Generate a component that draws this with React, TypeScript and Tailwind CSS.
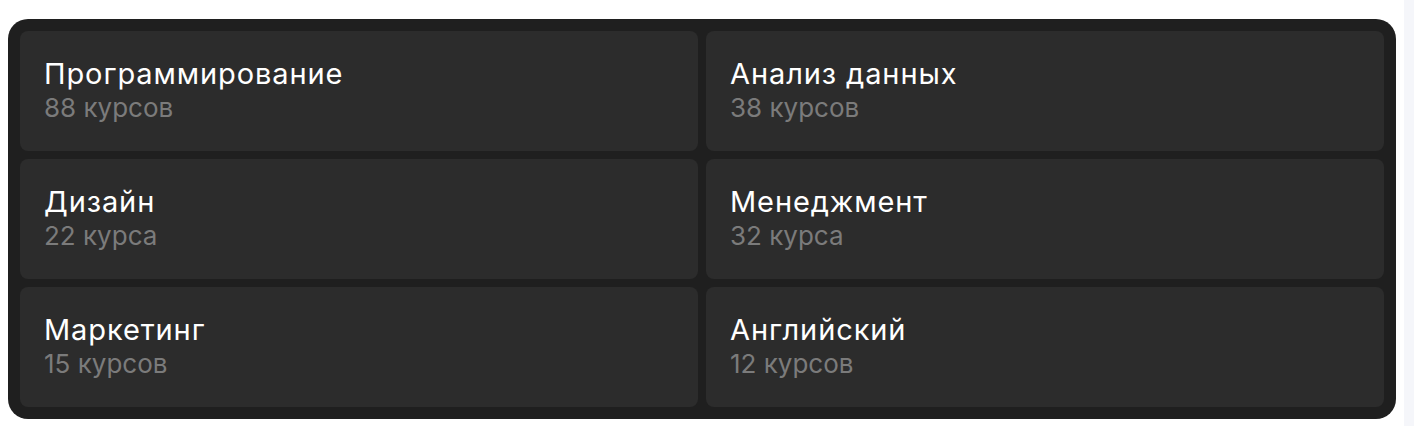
import React from "react";

type Category = {
  title: string;
  count: string;
};

const categories: Category[] = [
  { title: "Программирование", count: "88 курсов" },
  { title: "Анализ данных", count: "38 курсов" },
  { title: "Дизайн", count: "22 курса" },
  { title: "Менеджмент", count: "32 курса" },
  { title: "Маркетинг", count: "15 курсов" },
  { title: "Английский", count: "12 курсов" },
];

const CategoryCard = ({ title, count }: Category) => {
  return (
    <div className="h-[120px] rounded-lg bg-[#2c2c2c] px-6 flex flex-col justify-center">
      <span className="text-[29px] leading-[30px] tracking-[0.9px] text-white">{title}</span>
      <span className="mt-[3px] text-[26px] leading-[32px] text-[#7b7b7b]">{count}</span>
    </div>
  );
};

const App = () => {
  return (
    <div className="flex h-[426px] bg-white font-['Inter',sans-serif]">
      <div className="flex-1 pt-[19px] pb-2 px-2">
        <div className="rounded-[20px] bg-[#1f1f1f] p-3 grid grid-cols-2 gap-2">
          {categories.map(c => (
            <CategoryCard key={c.title} title={c.title} count={c.count} />
          ))}
        </div>
      </div>
      <div className="w-[10px] bg-[#f5f6fa]" />
    </div>
  );
};

export default App;
